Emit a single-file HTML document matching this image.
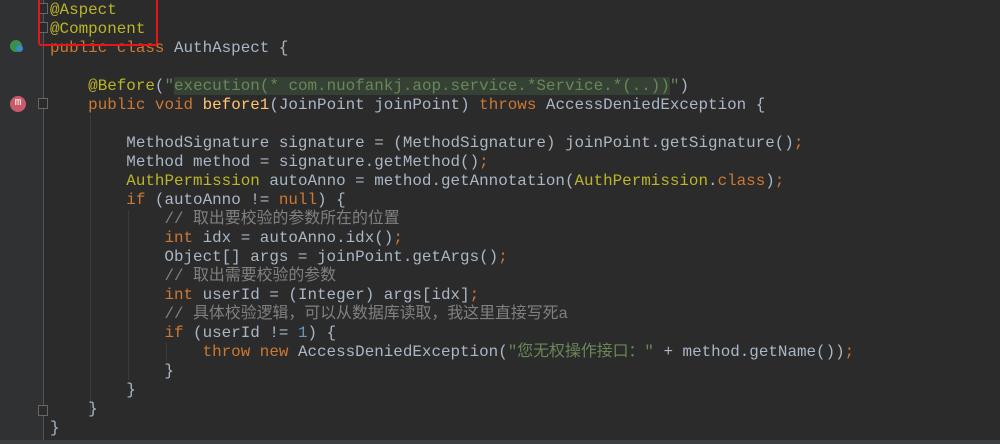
<!DOCTYPE html>
<html><head><meta charset="utf-8"><style>
body{margin:0;width:1000px;height:444px;background:#2b2b2b;overflow:hidden;position:relative;font-family:"Liberation Mono","Noto Sans CJK SC",monospace;}
.g{position:absolute;left:0;top:0;width:43px;height:444px;background:#2f3133;}
.gl{position:absolute;left:43px;top:0;width:1px;height:444px;background:#555;}
.l{position:absolute;left:50px;font-size:15.9px;color:#a9b7c6;white-space:pre;line-height:19px;margin-top:1px;}
.k{color:#cc7832}.a{color:#bbb529}.s{color:#6a8759}.n{color:#6897bb}.c{color:#808080}
.hl{background:#344134}
.box{position:absolute;left:38px;top:-2px;width:116px;height:44px;border:2.5px solid #e8141c;border-radius:3px;}
.ig{position:absolute;width:1px;background:#3b3b3b;}
.fold{position:absolute;left:38px;width:8px;height:9px;border:1px solid #666;background:#2b2b2b;}
</style></head><body>
<div class="g"></div><div class="gl"></div>
<div class="ig" style="left:90px;top:115px;height:300px"></div>
<div class="ig" style="left:128px;top:210px;height:170px"></div>
<div class="ig" style="left:166px;top:343px;height:18px"></div>
<div class="fold" style="top:3px"></div>
<div class="fold" style="top:22px"></div>
<div class="fold" style="top:98px"></div>
<div class="fold" style="top:405px"></div>
<div style="position:absolute;left:10px;top:40px;width:12px;height:12px;border-radius:50%;background:#3a8f4a"></div>
<div style="position:absolute;left:16px;top:45px;width:7px;height:7px;border-radius:50%;background:#3b87c8"></div>
<div style="position:absolute;left:10px;top:96px;width:16px;height:16px;border-radius:50%;background:#c85a6a;color:#fff;font-size:11px;text-align:center;line-height:15px">m</div>
<div class="l" style="top:0"><span class="a">@Aspect</span></div>
<div class="l" style="top:19px"><span class="a">@Component</span></div>
<div class="l" style="top:38px"><span class="k">public class </span>AuthAspect {</div>
<div class="l" style="top:76px">    <span class="a">@Before</span>(<span class="s">"<span class="hl">execution(* com.nuofankj.aop.service.*Service.*(..))</span>"</span>)</div>
<div class="l" style="top:95px">    <span class="k">public void </span><span style="color:#ffc66d">before1</span>(JoinPoint joinPoint) <span class="k">throws </span>AccessDeniedException {</div>
<div class="l" style="top:133px">        MethodSignature signature = (MethodSignature) joinPoint.getSignature()<span class="k">;</span></div>
<div class="l" style="top:152px">        Method method = signature.getMethod()<span class="k">;</span></div>
<div class="l" style="top:171px">        <span class="a">AuthPermission</span> autoAnno = method.getAnnotation(<span class="a">AuthPermission</span>.<span class="k">class</span>)<span class="k">;</span></div>
<div class="l" style="top:190px">        <span class="k">if </span>(autoAnno != <span class="k">null</span>) {</div>
<div class="l" style="top:209px">            <span class="c">// 取出要校验的参数所在的位置</span></div>
<div class="l" style="top:228px">            <span class="k">int </span>idx = autoAnno.idx()<span class="k">;</span></div>
<div class="l" style="top:247px">            Object[] args = joinPoint.getArgs()<span class="k">;</span></div>
<div class="l" style="top:266px">            <span class="c">// 取出需要校验的参数</span></div>
<div class="l" style="top:285px">            <span class="k">int </span>userId = (Integer) args[idx]<span class="k">;</span></div>
<div class="l" style="top:304px">            <span class="c">// 具体校验逻辑，可以从数据库读取，我这里直接写死a</span></div>
<div class="l" style="top:323px">            <span class="k">if </span>(userId != <span class="n">1</span>) {</div>
<div class="l" style="top:342px">                <span class="k">throw new </span>AccessDeniedException(<span class="s">"您无权操作接口："</span> + method.getName())<span class="k">;</span></div>
<div class="l" style="top:361px">            }</div>
<div class="l" style="top:380px">        }</div>
<div class="l" style="top:399px">    }</div>
<div class="l" style="top:418px">}</div>
<div class="box"></div>
<div style="position:absolute;left:0;top:440px;width:1000px;height:4px;background:#3c3f41"></div>
</body></html>
